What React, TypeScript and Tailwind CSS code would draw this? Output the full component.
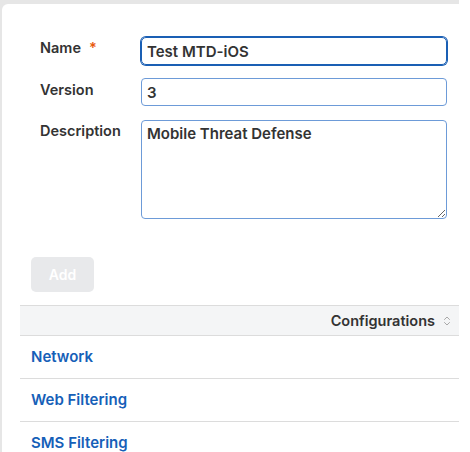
import { ChevronsUpDown } from "lucide-react";

const configs = ["Network", "Web Filtering", "SMS Filtering"];

function Field({
  label,
  required,
  children,
}: {
  label: string;
  required?: boolean;
  children: React.ReactNode;
}) {
  return (
    <div className="flex items-start">
      <div className="mt-[1px] w-[101px] shrink-0 text-[14.5px] font-semibold leading-[20px] text-[#333]">
        {label}
        {required && <span className="ml-[8px] text-[#e8590c]">*</span>}
      </div>
      {children}
    </div>
  );
}

export default function App() {
  return (
    <div
      className="flex h-[452px] w-[470px] overflow-hidden bg-white"
      style={{ fontFamily: "Inter, 'Noto Sans', sans-serif" }}
    >
      <div className="h-full w-[459px] bg-[#e6e6e6] pl-[2px] pt-[4px]">
        <div className="h-full rounded-tl-[6px] bg-white pt-[33px]">
          <div className="flex flex-col gap-[14px] pl-[38px] pr-[12px]">
            <Field label="Name" required>
              <input
                readOnly
                defaultValue="Test MTD-iOS"
                className="h-[28px] w-[306px] rounded-[5px] border border-[#1a5fb4] px-[5px] text-[15px] font-semibold text-[#333] outline-none ring-1 ring-[#1a5fb4]"
              />
            </Field>
            <Field label="Version">
              <input
                readOnly
                defaultValue="3"
                className="-mt-[1px] h-[28px] w-[306px] rounded-[4px] border border-[#6d9bd8] px-[5px] text-[15px] font-semibold text-[#333] outline-none"
              />
            </Field>
            <Field label="Description">
              <textarea
                readOnly
                defaultValue="Mobile Threat Defense"
                className="h-[99px] w-[306px] rounded-[4px] border border-[#6d9bd8] px-[5px] pt-[3px] text-[15px] font-semibold leading-[20px] text-[#333] outline-none"
              />
            </Field>
          </div>

          <div className="ml-[29px] mt-[38px] flex h-[35px] w-[63px] items-center justify-center rounded-[5px] bg-[#e8e9eb] text-[14px] font-semibold text-white">
            Add
          </div>

          <div className="ml-[18px] mt-[13px]">
            <div className="flex h-[31px] items-center justify-end border-y border-[#dcdcdc] bg-[#f4f5f6] pr-[6px] text-[14.5px] font-semibold text-[#333]">
              Configurations
              <ChevronsUpDown
                className="ml-[6px] text-[#a8a8a8]"
                size={12}
                strokeWidth={2}
              />
            </div>
            {configs.map((c) => (
              <div
                key={c}
                className="flex h-[43px] items-center border-b border-[#dcdcdc] pl-[11px] text-[15px] font-semibold text-[#1660b8]"
              >
                {c}
              </div>
            ))}
          </div>
        </div>
      </div>
    </div>
  );
}
